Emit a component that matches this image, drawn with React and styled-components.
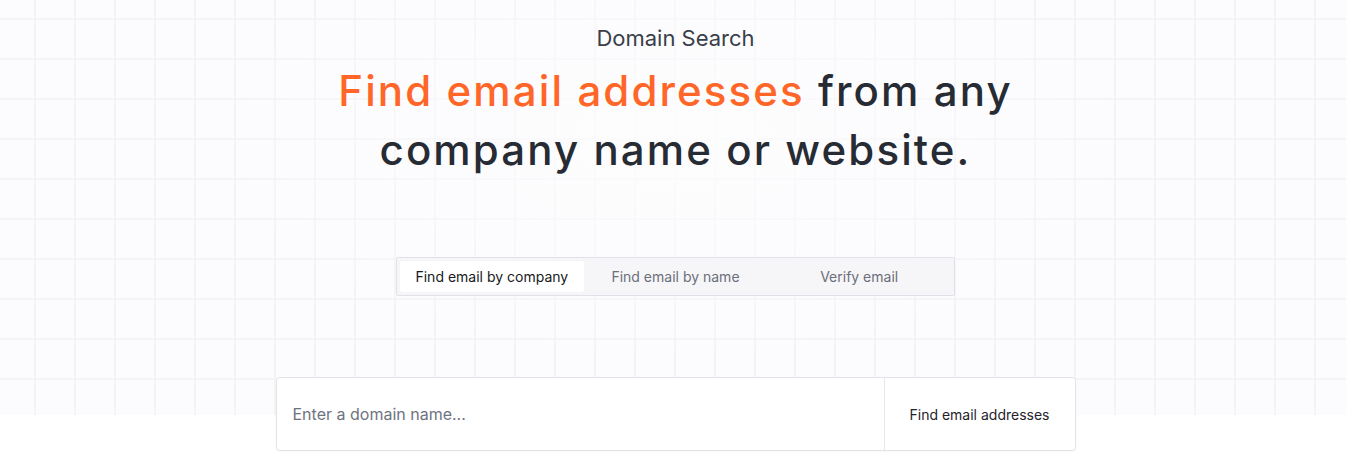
import React from "react";
import styled, { createGlobalStyle } from "styled-components";

const Global = createGlobalStyle`
  html, body { margin: 0; padding: 0; background: #ffffff; }
  body { font-family: "Inter", "Noto Sans", sans-serif; -webkit-font-smoothing: antialiased; }
  * { box-sizing: border-box; }
`;

const Page = styled.main`
  width: 100%;
  min-height: 463px;
  padding: 24px 0 0 5px;
  display: flex;
  flex-direction: column;
  align-items: center;
  background-color: #ffffff;
  background-image:
    linear-gradient(to bottom, transparent 415px, #ffffff 415px),
    radial-gradient(ellipse 460px 220px at 50% 140px, rgba(253,253,254,0.9), rgba(253,253,254,0)),
    linear-gradient(to right, #f4f4f7 2px, transparent 2px),
    linear-gradient(to bottom, #f4f4f7 2px, transparent 2px),
    linear-gradient(#fcfcfe, #fcfcfe);
  background-size: 100% 100%, 100% 100%, 40px 40px, 40px 40px, 100% 415px;
  background-position: 0 0, 0 0, 34px 0, 0 18px, 0 0;
  background-repeat: no-repeat, no-repeat, repeat, repeat, no-repeat;
`;

const Eyebrow = styled.div`
  font-size: 22px;
  line-height: 28px;
  font-weight: 400;
  color: #3a3f4a;
`;

const Headline = styled.h1`
  margin: 9px 0 0;
  font-size: 42px;
  line-height: 59px;
  font-weight: 500;
  color: #272b34;
  text-align: center;
  letter-spacing: 2.1px;
`;

const Accent = styled.span`
  color: #ff6628;
`;

const Tabs = styled.div`
  margin-top: 78px;
  width: 559px;
  height: 39px;
  padding: 3px;
  display: grid;
  grid-template-columns: repeat(3, 1fr);
  background: #f6f6f9;
  border: 1px solid #e1e2e9;
  border-radius: 2px;
`;

const Tab = styled.button`
  border: none;
  border-radius: 2px;
  font-family: "Inter", sans-serif;
  font-size: 14px;
  background: ${(p) => (p.$active ? "#ffffff" : "transparent")};
  color: ${(p) => (p.$active ? "#161a22" : "#6b6f7a")};
  box-shadow: ${(p) => (p.$active ? "0 0 1px rgba(0,0,0,0.06)" : "none")};
  padding: 0;
  cursor: pointer;
`;

const SearchBox = styled.form`
  margin-top: 81px;
  width: 800px;
  height: 74px;
  display: flex;
  background: #ffffff;
  border: 1px solid #e3e4ea;
  border-radius: 4px;
  box-shadow: 0 1px 2px rgba(0,0,0,0.03);
`;

const Input = styled.input`
  flex: 1;
  border: none;
  outline: none;
  background: transparent;
  padding: 0 16px;
  font-family: "Inter", sans-serif;
  font-size: 16px;
  color: #111827;
  &::placeholder { color: #6e7380; }
`;

const SubmitButton = styled.button`
  width: 191px;
  border: none;
  border-left: 1px solid #e6e7ec;
  background: transparent;
  font-family: "Inter", sans-serif;
  font-size: 14px;
  color: #1f232b;
  cursor: pointer;
`;

export default function App() {
  return (
    <>
      <Global />
      <Page>
        <Eyebrow>Domain Search</Eyebrow>
        <Headline>
          <Accent>Find email addresses</Accent> from any
          <br />
          company name or website.
        </Headline>
        <Tabs>
          <Tab $active>Find email by company</Tab>
          <Tab>Find email by name</Tab>
          <Tab>Verify email</Tab>
        </Tabs>
        <SearchBox onSubmit={(e) => e.preventDefault()}>
          <Input placeholder="Enter a domain name..." />
          <SubmitButton type="submit">Find email addresses</SubmitButton>
        </SearchBox>
      </Page>
    </>
  );
}
